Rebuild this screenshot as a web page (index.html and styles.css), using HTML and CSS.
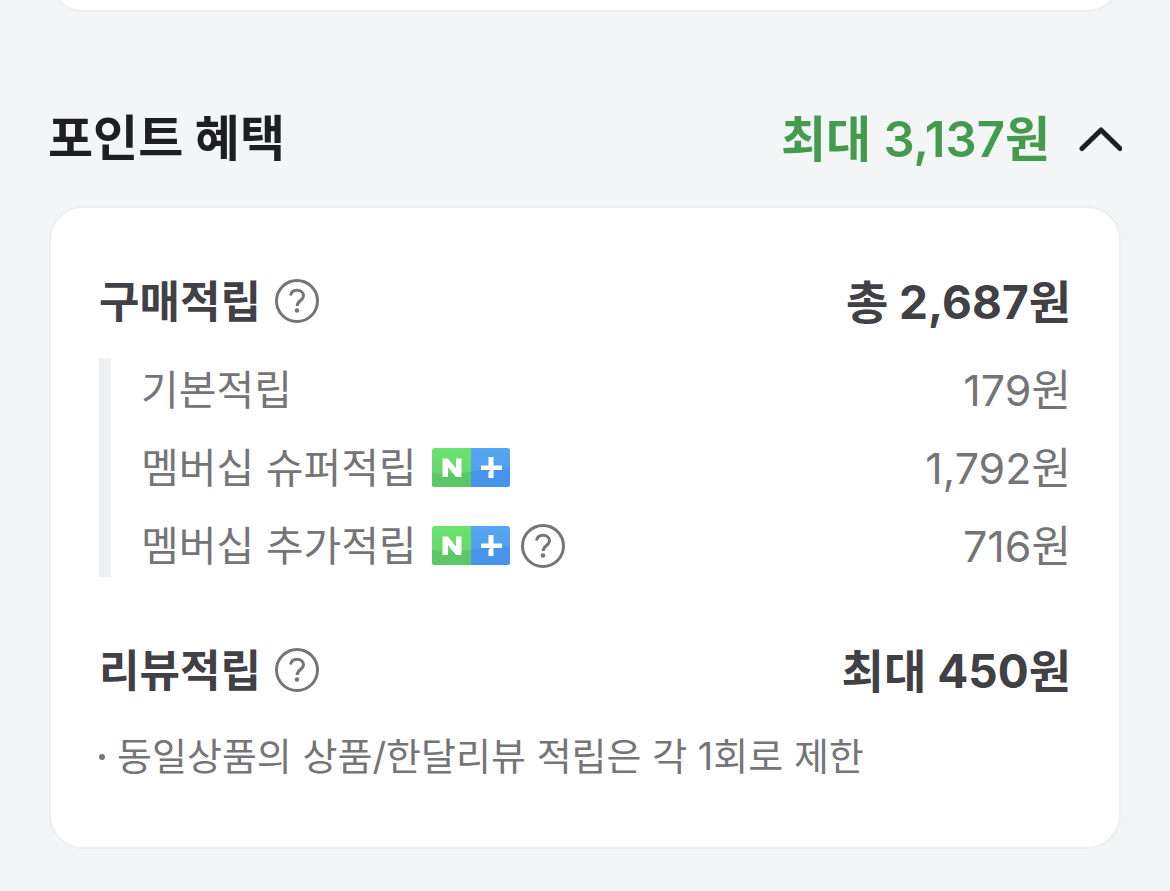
FILE: index.html
```html
<!DOCTYPE html>
<html lang="ko">
<head>
  <meta charset="UTF-8">
  <meta name="viewport" content="width=device-width, initial-scale=1.0">
  <title>포인트 혜택</title>
  <link rel="stylesheet" href="styles.css">
</head>
<body>
  <div class="prev-card"></div>

  <section class="benefit">
    <div class="benefit-header">
      <h2>포인트 혜택</h2>
      <button type="button" class="toggle" aria-expanded="true">
        <span>최대 3,137원</span>
        <svg class="chevron" viewBox="0 0 44 28"><path d="M4 23.500 23 5 42 23.500"/></svg>
      </button>
    </div>

    <div class="card">
      <!-- Purchase points -->
      <div class="row total">
        <h3>구매적립</h3>
        <button type="button" class="help" aria-label="구매적립 안내">
          <svg viewBox="0 0 44 44"><use href="#question"/></svg>
        </button>
        <strong>총 2,687원</strong>
      </div>
      <ul class="details">
        <li class="row">
          <span>기본적립</span>
          <span class="amount">179원</span>
        </li>
        <li class="row">
          <span>멤버십 슈퍼적립</span>
          <svg class="badge" viewBox="0 0 78 39"><use href="#nplus"/></svg>
          <span class="amount">1,792원</span>
        </li>
        <li class="row">
          <span>멤버십 추가적립</span>
          <svg class="badge" viewBox="0 0 78 39"><use href="#nplus"/></svg>
          <button type="button" class="help" aria-label="추가적립 안내">
            <svg viewBox="0 0 44 44"><use href="#question"/></svg>
          </button>
          <span class="amount">716원</span>
        </li>
      </ul>

      <!-- Review points -->
      <div class="row total">
        <h3>리뷰적립</h3>
        <button type="button" class="help" aria-label="리뷰적립 안내">
          <svg viewBox="0 0 44 44"><use href="#question"/></svg>
        </button>
        <strong>최대 450원</strong>
      </div>
      <p class="note"><i class="bullet"></i><span>동일상품의 상품/한달리뷰 적립은 각 1회로 제한</span></p>
    </div>
  </section>

  <!-- Shared icons -->
  <svg class="defs" width="0" height="0">
    <defs>
      <linearGradient id="green" x2="0" y2="1"><stop stop-color="#6be270"/><stop offset="1" stop-color="#62d469"/></linearGradient>
      <linearGradient id="blue" x2="0" y2="1"><stop stop-color="#56a6f2"/><stop offset="1" stop-color="#4d9bee"/></linearGradient>
      <g id="nplus">
        <path fill="url(#green)" d="M3 0H39V39H3Q0 39 0 36V3Q0 0 3 0"/>
        <path fill="url(#blue)" d="M39 0H75Q78 0 78 3V36Q78 39 75 39H39"/>
        <path fill="#5bc766" d="M0 24C14 27 26 25 39 24V39H3Q0 39 0 36z"/>
        <path fill="#4894ec" d="M39 24C54 22 66 20 78 21V36Q78 39 75 39H39z"/>
        <path fill="#fff" d="M10.500 10.500h5.500l8 10v-10h5.500v18.500h-5.500l-8-10v10h-5.500z"/>
        <path fill="#fff" d="M49 17.500h7.500V9h5v8.500H70v4.500h-8.500v8h-5v-6l2-2H49z"/>
      </g>
      <g id="question">
        <circle cx="22" cy="22" r="20.500"/>
        <path d="M15.500 16.500c.6-3.300 3-5.200 6.500-5.200 3.800 0 6.500 2.200 6.500 5.500 0 4.700-6.300 4.800-6.300 10.200"/>
        <circle class="dot" cx="22" cy="31.500" r="2.300"/>
      </g>
    </defs>
  </svg>
</body>
</html>
```
FILE: styles.css
```css
* {
  box-sizing: border-box;
}
body {
  margin: 0;
  padding: 0 49px 41px;
  background: #f3f5f7;
  color: #404045;
  font-family: Inter, "Noto Sans CJK KR", sans-serif;
}
h2, h3, p, ul {
  margin: 0;
  padding: 0;
}
button {
  padding: 0;
  border: none;
  background: none;
  color: inherit;
  font: inherit;
  cursor: pointer;
}

/* Bottom edge of the card above */
.prev-card {
  height: 72px;
  margin-top: -60px;
  background: #fff;
  border: 2px solid #eceef0;
  border-radius: 34px;
}

/* Section header */
.benefit-header {
  display: flex;
  justify-content: space-between;
  align-items: center;
  height: 72px;
  margin: 91px -1px 31px;
}
.benefit-header h2 {
  padding-bottom: 10px;
  color: #1e1e23;
  font-size: 49px;
  font-weight: 700;
}
.toggle {
  display: flex;
  align-items: center;
  gap: 28px;
  color: #459b4d;
  font-size: 49px;
  font-weight: 600;
}
.toggle span {
  padding-bottom: 8px;
}
.chevron {
  width: 44px;
  height: 28px;
  fill: none;
  stroke: #1e1e23;
  stroke-width: 5;
  stroke-linecap: round;
  stroke-linejoin: round;
}

/* Card */
.card {
  padding: 54px 48px 60px;
  background: #fff;
  border: 2px solid #eceef0;
  border-radius: 34px;
}
.row {
  display: flex;
  align-items: center;
}
.total {
  height: 78px;
}
.total h3 {
  padding-bottom: 4px;
  font-size: 44px;
  font-weight: 700;
}
.total strong {
  padding-bottom: 4px;
  font-size: 46px;
  font-weight: 700;
}
.total strong,
.amount {
  margin-left: auto;
}
.help {
  width: 44px;
  height: 44px;
  margin-left: 14px;
}
.help svg {
  display: block;
  fill: none;
  stroke: #757578;
  stroke-width: 3;
}
.dot {
  fill: #757578;
  stroke: none;
}

/* Breakdown list */
.details {
  display: flex;
  flex-direction: column;
  gap: 15px;
  margin: 18px 0 54px;
  padding-left: 30px;
  border-left: 12px solid #edeff1;
  color: #757578;
  font-size: 41px;
  list-style: none;
}
.details .row {
  height: 63px;
}
.details span {
  padding-bottom: 6px;
}
.details .amount {
  font-size: 43px;
}
.badge {
  width: 78px;
  height: 39px;
  margin-left: 15px;
}
.badge + .help {
  margin-left: 11px;
}
.note {
  display: flex;
  align-items: center;
  margin-top: 17px;
  color: #757578;
  font-size: 38px;
}
.note span {
  padding-bottom: 6px;
}
.bullet {
  width: 6px;
  height: 6px;
  margin-right: 12px;
  border-radius: 50%;
  background: #757578;
}
.defs {
  position: absolute;
}
```
